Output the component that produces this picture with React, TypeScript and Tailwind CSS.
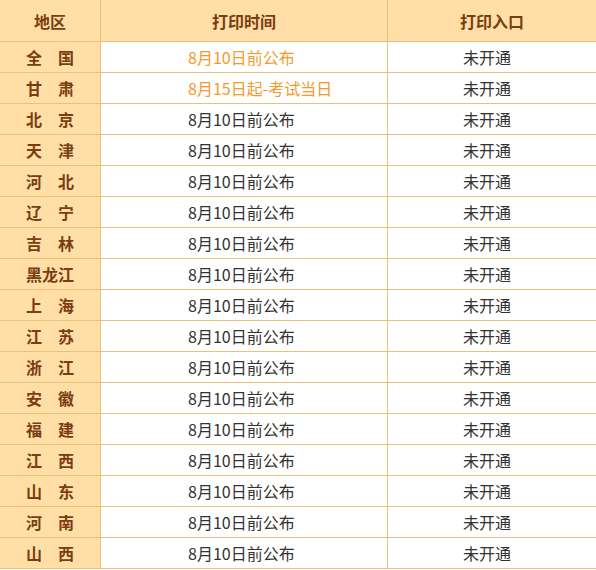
const rows: { area: string; time: string; highlight?: boolean }[] = [
  { area: "全　国", time: "8月10日前公布", highlight: true },
  { area: "甘　肃", time: "8月15日起-考试当日", highlight: true },
  { area: "北　京", time: "8月10日前公布" },
  { area: "天　津", time: "8月10日前公布" },
  { area: "河　北", time: "8月10日前公布" },
  { area: "辽　宁", time: "8月10日前公布" },
  { area: "吉　林", time: "8月10日前公布" },
  { area: "黑龙江", time: "8月10日前公布" },
  { area: "上　海", time: "8月10日前公布" },
  { area: "江　苏", time: "8月10日前公布" },
  { area: "浙　江", time: "8月10日前公布" },
  { area: "安　徽", time: "8月10日前公布" },
  { area: "福　建", time: "8月10日前公布" },
  { area: "江　西", time: "8月10日前公布" },
  { area: "山　东", time: "8月10日前公布" },
  { area: "河　南", time: "8月10日前公布" },
  { area: "山　西", time: "8月10日前公布" },
]

export default function App() {
  return (
    <div
      className="w-[596px] bg-white text-[16px] leading-none"
      style={{ fontFamily: '"Microsoft YaHei", "Noto Sans CJK SC", sans-serif' }}
    >
      {/* Header */}
      <div className="grid grid-cols-[101px_287px_1fr] bg-[#ffdfa6] text-[#7a3d12] font-bold">
        <div className="flex h-[42px] items-center justify-center border-b border-r border-[#e6c27c]">地区</div>
        <div className="flex h-[42px] items-center justify-center border-b border-r border-[#e6c27c]">打印时间</div>
        <div className="flex h-[42px] items-center justify-center border-b border-[#e6c27c]">打印入口</div>
      </div>

      {/* Body */}
      {rows.map((row) => (
        <div key={row.area} className="grid grid-cols-[101px_287px_1fr]">
          <div className="flex h-[31px] items-center justify-center border-b border-r border-[#e6c27c] bg-[#ffdfa6] font-bold text-[#7a3d12]">
            {row.area}
          </div>
          <div
            className={`flex h-[31px] items-center border-b border-r border-[#e6c27c] pl-[87px] ${
              row.highlight ? "text-[#f29b2c]" : "text-[#333333]"
            }`}
          >
            {row.time}
          </div>
          <div className="flex h-[31px] items-center border-b border-[#e6c27c] pl-[75px] text-[#333333]">未开通</div>
        </div>
      ))}
    </div>
  )
}
